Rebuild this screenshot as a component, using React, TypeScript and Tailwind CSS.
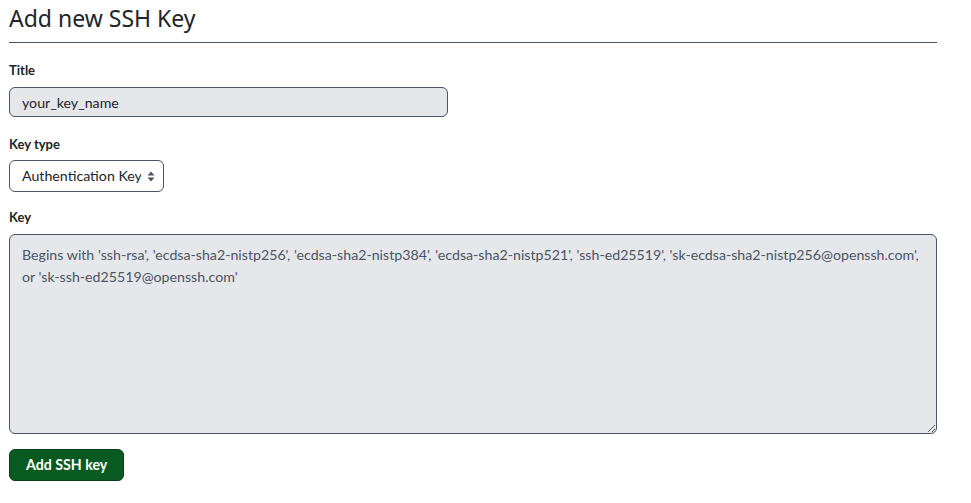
export default function App() {
  return (
    <div className="w-[971px] h-[503px] bg-white font-['Lato',sans-serif] text-[#212529]">
      <div className="w-[928px] pl-[9px] box-content">
        <h1 className="font-['Noto_Sans',sans-serif] text-[23px] leading-[32px] pt-[2px] pb-[8px] border-b border-[#4b5563]">Add new SSH Key</h1>

        <form className="flex flex-col pt-[17px]" onSubmit={e => e.preventDefault()}>
          <label className="text-[13px] font-bold leading-[20px]">Title</label>
          <input
            className="mt-[7px] w-[439px] h-[30px] rounded-[6px] border border-[#4b5563] bg-[#e5e7eb] px-[12px] text-[14.2px] text-[#212529] outline-none"
            defaultValue="your_key_name"
          />

          <label className="mt-[17px] text-[13px] font-bold leading-[20px]">Key type</label>
          <div className="relative mt-[6px] w-[155px] h-[32px]">
            <select className="appearance-none w-full h-full rounded-[6px] border border-[#4b5563] bg-white pl-[12px] pr-[22px] text-[14.2px] text-[#212529] outline-none">
              <option>Authentication Key</option>
              <option>Signing Key</option>
            </select>
            {/* up/down arrows */}
            <svg className="pointer-events-none absolute right-[9px] top-[11px]" width="8" height="11" viewBox="0 0 8 11" fill="#4b5563">
              <path d="M4 0.5L7.5 4.5H0.5Z" />
              <path d="M4 10.5L7.5 6.5H0.5Z" />
            </svg>
          </div>

          <label className="mt-[15px] text-[13px] font-bold leading-[20px]">Key</label>
          <textarea
            className="mt-[7px] w-[928px] h-[200px] rounded-[6px] border border-[#4b5563] bg-[#e5e7eb] px-[12px] py-[9px] text-[14.2px] leading-[22px] placeholder:text-[#4b5563] outline-none"
            placeholder="Begins with 'ssh-rsa', 'ecdsa-sha2-nistp256', 'ecdsa-sha2-nistp384', 'ecdsa-sha2-nistp521', 'ssh-ed25519', 'sk-ecdsa-sha2-nistp256@openssh.com', or 'sk-ssh-ed25519@openssh.com'"
          />

          <div className="pt-[15px]">
            <button type="submit" className="h-[32px] px-[16px] rounded-[6px] border border-[#0a3d17] bg-[#085a20] text-white text-[14.2px] font-bold">
              Add SSH key
            </button>
          </div>
        </form>
      </div>
    </div>
  )
}
